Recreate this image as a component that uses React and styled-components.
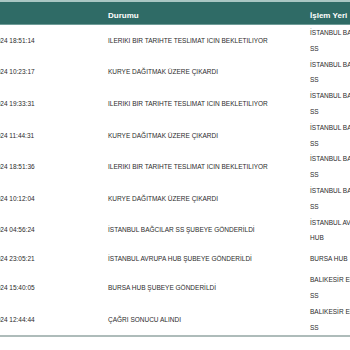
import React from "react";
import styled, { createGlobalStyle } from "styled-components";

const rows = [
    { date: "18.04.2024 18:51:14", status: "ILERIKI BIR TARIHTE TESLIMAT ICIN BEKLETILIYOR", place: "İSTANBUL BAĞCILAR SS" },
    { date: "17.04.2024 10:23:17", status: "KURYE DAĞITMAK ÜZERE ÇIKARDI", place: "İSTANBUL BAĞCILAR SS" },
    { date: "16.04.2024 19:33:31", status: "ILERIKI BIR TARIHTE TESLIMAT ICIN BEKLETILIYOR", place: "İSTANBUL BAĞCILAR SS" },
    { date: "16.04.2024 11:44:31", status: "KURYE DAĞITMAK ÜZERE ÇIKARDI", place: "İSTANBUL BAĞCILAR SS" },
    { date: "15.04.2024 18:51:36", status: "ILERIKI BIR TARIHTE TESLIMAT ICIN BEKLETILIYOR", place: "İSTANBUL BAĞCILAR SS" },
    { date: "15.04.2024 10:12:04", status: "KURYE DAĞITMAK ÜZERE ÇIKARDI", place: "İSTANBUL BAĞCILAR SS" },
    { date: "15.04.2024 04:56:24", status: "İSTANBUL BAĞCILAR SS ŞUBEYE GÖNDERİLDİ", place: "İSTANBUL AVRUPA HUB" },
    { date: "14.04.2024 23:05:21", status: "İSTANBUL AVRUPA HUB ŞUBEYE GÖNDERİLDİ", place: "BURSA HUB" },
    { date: "14.04.2024 15:40:05", status: "BURSA HUB ŞUBEYE GÖNDERİLDİ", place: "BALIKESİR EDREMİT SS" },
    { date: "14.04.2024 12:44:44", status: "ÇAĞRI SONUCU ALINDI", place: "BALIKESİR EDREMİT SS" },
];

const GlobalStyle = createGlobalStyle`
    html, body {
        margin: 0;
        padding: 0;
        background: #ffffff;
        font-family: "Liberation Sans", Arial, sans-serif;
    }
`;

export default function App() {
    return (
        <>
            <GlobalStyle />
            <Viewport>
                <Table>
                    <colgroup>
                        <col style={{ width: 133 }} />
                        <col style={{ width: 202 }} />
                        <col style={{ width: 86 }} />
                        <col style={{ width: 120 }} />
                    </colgroup>
                    <thead>
                        <tr>
                            <Th>Tarih</Th>
                            <Th>Durumu</Th>
                            <Th>İşlem Yeri</Th>
                            <Th>Açıklama</Th>
                        </tr>
                    </thead>
                    <tbody>
                        {rows.map((r, i) => (
                            <Row key={i}>
                                <Td>{r.date}</Td>
                                <Td>{r.status}</Td>
                                <Td>{r.place}</Td>
                                <Td></Td>
                            </Row>
                        ))}
                    </tbody>
                </Table>
            </Viewport>
        </>
    );
}

const Viewport = styled.div`
    width: 350px;
    height: 350px;
    overflow: hidden;
    background: #ffffff;
`;

const Table = styled.table`
    margin-left: -33px;
    border-collapse: collapse;
    table-layout: fixed;
    width: 541px;
    border-bottom: 2px solid #aebcba;
`;

const Th = styled.th`
    height: 18px;
    padding: 4px 8px 0;
    text-align: left;
    font-size: 8px;
    font-weight: 700;
    color: #ffffff;
    background: #2f6b66;
    border-top: 2px solid #a9c6c3;
    border-bottom: 1px solid #6f9c98;
    white-space: nowrap;
`;

const Row = styled.tr`
    height: 26px;
`;

const Td = styled.td`
    padding: 0 8px;
    font-size: 6.5px;
    line-height: 15.8px;
    color: #2b2b2b;
    vertical-align: middle;
`;
